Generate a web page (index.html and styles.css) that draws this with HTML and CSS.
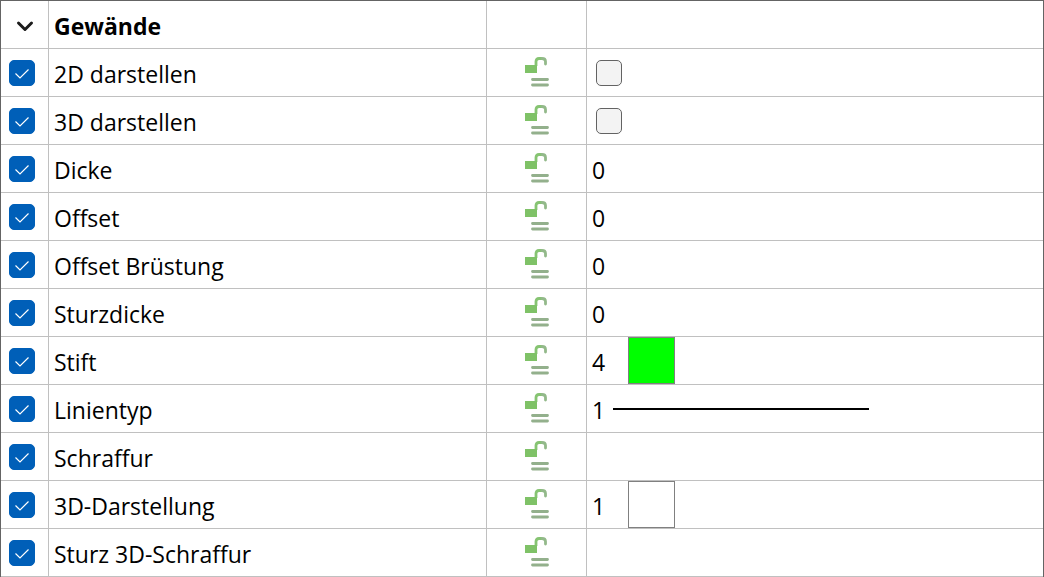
FILE: index.html
```html
<!DOCTYPE html>
<html lang="de">
<head>
  <meta charset="UTF-8">
  <meta name="viewport" content="width=device-width, initial-scale=1.0">
  <title>Gewände</title>
  <link rel="stylesheet" href="styles.css">
</head>
<body>
  <svg class="defs" width="0" height="0" aria-hidden="true">
    <symbol id="unlock" viewBox="0 0 25 31">
      <path d="M12 9V4.500Q12 1.500 15 1.500H18" fill="none" stroke="#86c472" stroke-width="2.800"/>
      <path d="M18 1.500Q21.500 1.500 21.500 4.500V7" fill="none" stroke="#93b98a" stroke-width="2.800" stroke-linecap="round"/>
      <rect x="1" y="8" width="12" height="8" fill="#7fc267"/>
      <path d="M8.500 22.500H23.500M8.500 28H23.500" fill="none" stroke="#93b08c" stroke-width="2.800" stroke-linecap="round"/>
    </symbol>
  </svg>

  <table class="props">
    <colgroup>
      <col class="col-check">
      <col class="col-name">
      <col class="col-lock">
      <col>
    </colgroup>
    <thead>
      <tr>
        <td class="toggle">
          <button type="button" aria-label="Gewände einklappen" aria-expanded="true">
            <svg width="18" height="12" viewBox="0 0 18 12"><path d="M2.500 3L9 9.500L15.500 3" fill="none" stroke="#1c1c1c" stroke-width="3" stroke-linecap="round" stroke-linejoin="round"/></svg>
          </button>
        </td>
        <th scope="col">Gewände</th>
        <td></td>
        <td></td>
      </tr>
    </thead>
    <tbody>
      <tr>
        <td class="check"><input type="checkbox" id="p1" checked></td>
        <td class="name"><label for="p1">2D darstellen</label></td>
        <td class="lock"><button type="button" aria-label="Sperre"><svg><use href="#unlock"/></svg></button></td>
        <td class="check value-check"><input type="checkbox" aria-label="2D darstellen Wert"></td>
      </tr>
      <tr>
        <td class="check"><input type="checkbox" id="p2" checked></td>
        <td class="name"><label for="p2">3D darstellen</label></td>
        <td class="lock"><button type="button" aria-label="Sperre"><svg><use href="#unlock"/></svg></button></td>
        <td class="check value-check"><input type="checkbox" aria-label="3D darstellen Wert"></td>
      </tr>
      <tr>
        <td class="check"><input type="checkbox" id="p3" checked></td>
        <td class="name"><label for="p3">Dicke</label></td>
        <td class="lock"><button type="button" aria-label="Sperre"><svg><use href="#unlock"/></svg></button></td>
        <td class="value">0</td>
      </tr>
      <tr>
        <td class="check"><input type="checkbox" id="p4" checked></td>
        <td class="name"><label for="p4">Offset</label></td>
        <td class="lock"><button type="button" aria-label="Sperre"><svg><use href="#unlock"/></svg></button></td>
        <td class="value">0</td>
      </tr>
      <tr>
        <td class="check"><input type="checkbox" id="p5" checked></td>
        <td class="name"><label for="p5">Offset Brüstung</label></td>
        <td class="lock"><button type="button" aria-label="Sperre"><svg><use href="#unlock"/></svg></button></td>
        <td class="value">0</td>
      </tr>
      <tr>
        <td class="check"><input type="checkbox" id="p6" checked></td>
        <td class="name"><label for="p6">Sturzdicke</label></td>
        <td class="lock"><button type="button" aria-label="Sperre"><svg><use href="#unlock"/></svg></button></td>
        <td class="value">0</td>
      </tr>
      <tr>
        <td class="check"><input type="checkbox" id="p7" checked></td>
        <td class="name"><label for="p7">Stift</label></td>
        <td class="lock"><button type="button" aria-label="Sperre"><svg><use href="#unlock"/></svg></button></td>
        <td class="sample"><div class="pick"><span>4</span><i class="swatch green"></i></div></td>
      </tr>
      <tr>
        <td class="check"><input type="checkbox" id="p8" checked></td>
        <td class="name"><label for="p8">Linientyp</label></td>
        <td class="lock"><button type="button" aria-label="Sperre"><svg><use href="#unlock"/></svg></button></td>
        <td class="sample"><div class="pick line"><span>1</span><i class="stroke"></i></div></td>
      </tr>
      <tr>
        <td class="check"><input type="checkbox" id="p9" checked></td>
        <td class="name"><label for="p9">Schraffur</label></td>
        <td class="lock"><button type="button" aria-label="Sperre"><svg><use href="#unlock"/></svg></button></td>
        <td></td>
      </tr>
      <tr>
        <td class="check"><input type="checkbox" id="p10" checked></td>
        <td class="name"><label for="p10">3D-Darstellung</label></td>
        <td class="lock"><button type="button" aria-label="Sperre"><svg><use href="#unlock"/></svg></button></td>
        <td class="sample"><div class="pick"><span>1</span><i class="swatch"></i></div></td>
      </tr>
      <tr>
        <td class="check"><input type="checkbox" id="p11" checked></td>
        <td class="name"><label for="p11">Sturz 3D-Schraffur</label></td>
        <td class="lock"><button type="button" aria-label="Sperre"><svg><use href="#unlock"/></svg></button></td>
        <td></td>
      </tr>
    </tbody>
  </table>
</body>
</html>
```
FILE: styles.css
```css
:root {
  --grid: #c0c0c0;
  --frame: #646464;
  --accent: #005fb8;
}

* {
  box-sizing: border-box;
}

body {
  margin: 0;
  background: #fff;
  color: #000;
  font-family: "Open Sans", "Noto Sans", sans-serif;
  font-size: 23px;
  line-height: 32px;
}

.defs {
  display: block;
}

.props {
  width: 100%;
  table-layout: fixed;
  border-collapse: separate;
  border-spacing: 0;
  border: 1px solid var(--frame);
  border-bottom: 0;
}

.col-check {
  width: 48px;
}

.col-name {
  width: 438px;
}

.col-lock {
  width: 100px;
}

.props th,
.props td {
  height: 48px;
  padding: 2px 5px 0;
  border-right: 1px solid var(--grid);
  border-bottom: 1px solid var(--grid);
  text-align: left;
  vertical-align: middle;
}

.props tr > :last-child {
  border-right: 0;
}

.props button {
  display: block;
  margin: 0 auto;
  padding: 0;
  border: 0;
  background: none;
}

.props svg {
  display: block;
}

.props .toggle {
  padding: 2px 0 0;
}

.props .lock {
  padding: 0;
}

.lock svg {
  width: 25px;
  height: 31px;
}

.props .check {
  padding: 0 0 0 8px;
}

.props .value-check {
  padding-left: 9px;
}

.check input {
  display: block;
  appearance: none;
  width: 26px;
  height: 26px;
  margin: 0;
  border: 1px solid #636363;
  border-radius: 5px;
  background: #f3f3f3;
}

.check input:checked {
  border-color: var(--accent);
  background: var(--accent) url("data:image/svg+xml,%3Csvg xmlns='http://www.w3.org/2000/svg' viewBox='0 0 24 24'%3E%3Cpath d='M5.500 12.500L10 17L18.500 8.500' fill='none' stroke='white' stroke-width='1.200'/%3E%3C/svg%3E") center / 24px 24px no-repeat;
}

.props .sample {
  padding: 0 5px;
}

.pick {
  display: flex;
  align-items: center;
  height: 47px;
}

.pick span {
  width: 36px;
  padding-top: 2px;
}

.pick.line span {
  width: 21px;
}

.swatch {
  width: 47px;
  height: 47px;
  border: 1px solid #808080;
  background: #fff;
}

.swatch.green {
  background: #0f0;
}

.stroke {
  width: 256px;
  height: 2px;
  background: #000;
}
```
